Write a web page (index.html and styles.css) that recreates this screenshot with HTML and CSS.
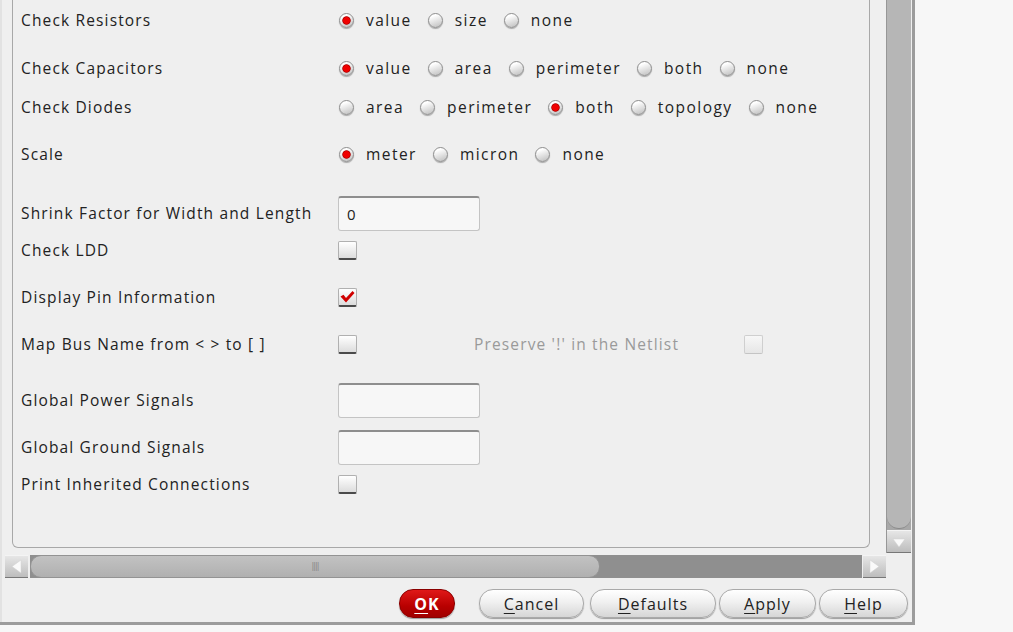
FILE: index.html
```html
<!DOCTYPE html>
<html>
<head>
<meta charset="utf-8">
<link rel="stylesheet" href="styles.css">
</head>
<body>
<div class="dialog">
  <div class="scroll-wrap">
    <div class="viewport">
      <div class="frame">
        <div class="row r1">
          <div class="label">Check Resistors</div>
          <div class="ctrl">
            <span class="opt"><span class="radio on"></span>value</span>
            <span class="opt"><span class="radio"></span>size</span>
            <span class="opt"><span class="radio"></span>none</span>
          </div>
        </div>
        <div class="row r2">
          <div class="label">Check Capacitors</div>
          <div class="ctrl">
            <span class="opt"><span class="radio on"></span>value</span>
            <span class="opt"><span class="radio"></span>area</span>
            <span class="opt"><span class="radio"></span>perimeter</span>
            <span class="opt"><span class="radio"></span>both</span>
            <span class="opt"><span class="radio"></span>none</span>
          </div>
        </div>
        <div class="row r3">
          <div class="label">Check Diodes</div>
          <div class="ctrl">
            <span class="opt"><span class="radio"></span>area</span>
            <span class="opt"><span class="radio"></span>perimeter</span>
            <span class="opt"><span class="radio on"></span>both</span>
            <span class="opt"><span class="radio"></span>topology</span>
            <span class="opt"><span class="radio"></span>none</span>
          </div>
        </div>
        <div class="row r4">
          <div class="label">Scale</div>
          <div class="ctrl">
            <span class="opt"><span class="radio on"></span>meter</span>
            <span class="opt"><span class="radio"></span>micron</span>
            <span class="opt"><span class="radio"></span>none</span>
          </div>
        </div>
        <div class="row r5">
          <div class="label">Shrink Factor for Width and Length</div>
          <div class="ctrl"><div class="field">0</div></div>
        </div>
        <div class="row r6">
          <div class="label">Check LDD</div>
          <div class="ctrl"><span class="check"></span></div>
        </div>
        <div class="row r7">
          <div class="label">Display Pin Information</div>
          <div class="ctrl"><span class="check"><svg width="19" height="19" viewBox="0 0 19 19"><path d="M2.5 8.5 L5.5 6.8 L8 10 L14.5 3 L16.5 5 L8 14.5 Z" fill="#d00000"/></svg></span></div>
        </div>
        <div class="row r8">
          <div class="label">Map Bus Name from &lt; &gt; to [ ]</div>
          <div class="ctrl">
            <span class="check"></span>
            <span class="disabled-label">Preserve '!' in the Netlist</span>
            <span class="check disabled"></span>
          </div>
        </div>
        <div class="row r9">
          <div class="label">Global Power Signals</div>
          <div class="ctrl"><div class="field"></div></div>
        </div>
        <div class="row r10">
          <div class="label">Global Ground Signals</div>
          <div class="ctrl"><div class="field"></div></div>
        </div>
        <div class="row r11">
          <div class="label">Print Inherited Connections</div>
          <div class="ctrl"><span class="check"></span></div>
        </div>
      </div>
    </div>
    <div class="vscroll">
      <div class="vthumb"></div>
      <div class="arrow-btn"><svg width="24" height="22" viewBox="0 0 24 22"><path d="M6 8 L18 8 L12 16 Z" fill="#fafafa" stroke="#d0d0d0" stroke-width="0.5"/></svg></div>
    </div>
    <div class="hscroll">
      <div class="arrow-btn h"><svg width="23" height="23" viewBox="0 0 23 23"><path d="M16 5 L16 18 L7 11.5 Z" fill="#fafafa" stroke="#d0d0d0" stroke-width="0.5"/></svg></div>
      <div class="htrack">
        <div class="hthumb"><span class="grip">||||</span></div>
      </div>
      <div class="arrow-btn h"><svg width="23" height="23" viewBox="0 0 23 23"><path d="M7 5 L7 18 L16 11.5 Z" fill="#fafafa" stroke="#d0d0d0" stroke-width="0.5"/></svg></div>
    </div>
  </div>
  <div class="buttons">
    <button class="btn ok"><u>O</u>K</button>
    <button class="btn cancel"><u>C</u>ancel</button>
    <button class="btn defaults"><u>D</u>efaults</button>
    <button class="btn apply"><u>A</u>pply</button>
    <button class="btn help"><u>H</u>elp</button>
  </div>
</div>
</body>
</html>
```
FILE: styles.css
```css
html, body {
  margin: 0;
  padding: 0;
  background: #f7f7f7;
  font-family: "Open Sans", "DejaVu Sans", sans-serif;
  color: #222;
}
.dialog {
  width: 912px;
  height: 622px;
  background: #efefef;
  border-right: 3px solid #9c9c9c;
  border-bottom: 3px solid #9c9c9c;
  box-shadow: inset 3px 0 0 -1px #e2e2e2;
}
.scroll-wrap {
  display: grid;
  grid-template-columns: 881px 25px;
  grid-template-rows: 553px 23px;
  row-gap: 2px;
  padding-left: 5px;
}
.viewport {
  padding: 0 16px 5px 7px;
}
.frame {
  height: 100%;
  box-sizing: border-box;
  border: 1px solid #a8a8a8;
  border-top: none;
  border-radius: 0 0 6px 6px;
  padding: 2px 0 0 8px;
}
.row {
  display: flex;
  align-items: center;
  height: 36px;
  font-size: 15.5px;
  letter-spacing: 1.15px;
}
.r2 { margin-top: 12px; }
.r3 { margin-top: 3px; }
.r4 { margin-top: 11px; }
.r5 { margin-top: 23px; }
.r6 { margin-top: 1px; }
.r7 { margin-top: 11px; }
.r8 { margin-top: 11px; }
.r9 { margin-top: 20px; }
.r10 { margin-top: 11px; }
.r11 { margin-top: 1px; }
.label {
  width: 317px;
  flex: none;
  white-space: nowrap;
}
.ctrl {
  display: flex;
  align-items: center;
}
.opt {
  display: inline-flex;
  align-items: center;
  margin-right: 15px;
  white-space: nowrap;
  letter-spacing: 1.45px;
}
.radio {
  width: 15px;
  height: 15px;
  box-sizing: border-box;
  border-radius: 50%;
  border: 1px solid #8e8e8e;
  background: linear-gradient(160deg, #ffffff 20%, #dedede 60%, #bdbdbd);
  box-shadow: 0 1px 1px rgba(0,0,0,0.3);
  margin: 0 12px 0 1px;
  flex: none;
}
.radio.on {
  background: radial-gradient(circle, #f00000 0 3px, #b00000 3.8px, rgba(255,255,255,0) 4.6px), linear-gradient(160deg, #ffffff 20%, #dedede 60%, #bdbdbd);
}
.field {
  width: 142px;
  height: 35px;
  box-sizing: border-box;
  border: 1px solid #c4c4c4;
  border-top: 2px solid #8e8e8e;
  border-radius: 3px;
  background: #f7f7f7;
  padding: 0 0 0 8px;
  line-height: 32px;
  font-size: 15px;
}
.check {
  display: inline-block;
  width: 19px;
  height: 19px;
  box-sizing: border-box;
  border: 1px solid #b0b0b0;
  border-bottom: 2px solid #4a4a4a;
  border-radius: 2px;
  background: linear-gradient(#ffffff, #dcdcdc);
  flex: none;
  position: relative;
}
.check svg {
  position: absolute;
  left: -1px;
  top: -1px;
}
.check.disabled {
  border-color: #cfcfcf;
  border-bottom: 1px solid #c4c4c4;
  background: linear-gradient(#f7f7f7, #e6e6e6);
}
.disabled-label {
  color: #9a9a9a;
  margin-left: 117px;
  width: 270px;
  white-space: nowrap;
}
.vscroll {
  display: flex;
  flex-direction: column;
  background: #a8a8a8;
  border-left: 1px solid #979797;
  box-sizing: border-box;
}
.vthumb {
  flex: 1;
  background: #b6b6b6;
  border-radius: 0 0 12px 12px;
  border-bottom: 1px solid #8a8a8a;
  margin-bottom: 1px;
}
.arrow-btn {
  height: 23px;
  background: linear-gradient(#e6e6e6, #bdbdbd);
  border-top: 1px solid #f4f4f4;
  border-bottom: 1px solid #777;
  display: flex;
  align-items: center;
  justify-content: center;
  box-sizing: border-box;
}
.arrow-btn.h {
  width: 23px;
  height: 23px;
  flex: none;
}
.hscroll {
  display: flex;
  align-items: stretch;
  height: 23px;
}
.htrack {
  flex: 1;
  display: flex;
  background: #8f8f8f;
  margin: 0 1px 0 2px;
}
.hthumb {
  width: 570px;
  background: linear-gradient(#c2c2c2, #b0b0b0);
  border: 1px solid #939393;
  border-radius: 11px;
  box-sizing: border-box;
  display: flex;
  align-items: center;
  justify-content: center;
}
.grip {
  font-family: "DejaVu Sans", sans-serif;
  font-size: 8px;
  letter-spacing: -1px;
  color: #888;
}
.buttons {
  display: flex;
  justify-content: flex-end;
  gap: 3px;
  padding: 11px 4px 0 0;
}
.btn {
  height: 29px;
  border-radius: 14px;
  border: 1px solid #a9a9a9;
  background: linear-gradient(#ffffff 0%, #f0f0f0 45%, #d6d6d6 100%);
  box-shadow: 0 1px 1px rgba(0,0,0,0.35);
  font-family: "Open Sans", "DejaVu Sans", sans-serif;
  font-size: 16px;
  letter-spacing: 1px;
  color: #222;
  padding: 0;
}
.btn u { text-underline-offset: 3px; }
.ok {
  width: 56px;
  margin-right: 21px;
  background: linear-gradient(#e01818, #b80000 60%, #a00000);
  border-color: #8a0000;
  color: #fff;
  font-weight: bold;
}
.cancel { width: 105px; margin-right: 3px; }
.defaults { width: 126px; }
.apply { width: 97px; }
.help { width: 89px; }
```
